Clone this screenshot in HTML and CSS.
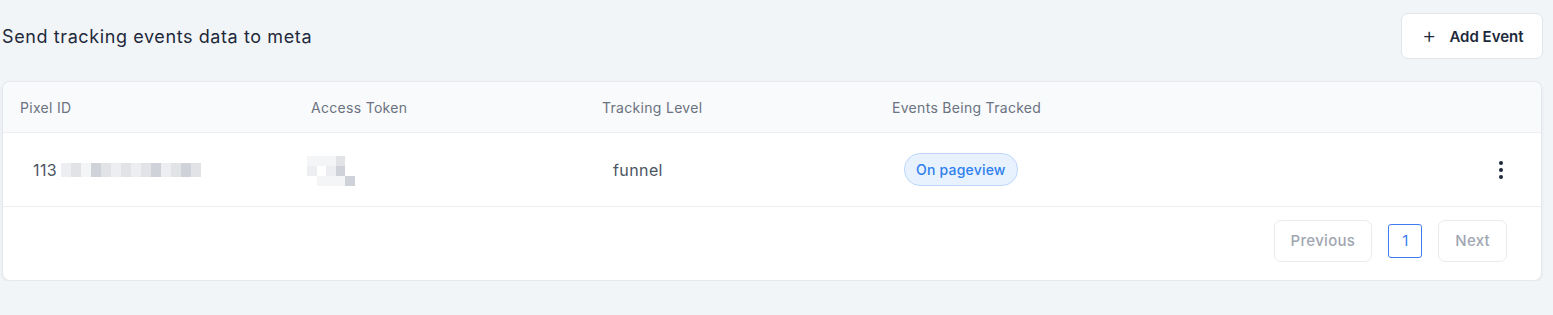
FILE: index.html
```html
<!DOCTYPE html>
<html lang="en">
<head>
    <meta charset="UTF-8">
    <meta name="viewport" content="width=device-width, initial-scale=1.0">
    <title>Meta tracking</title>
    <link rel="stylesheet" href="styles.css">
</head>
<body>
    <div class="page">
        <div class="topbar">
            <h2 class="title">Send tracking events data to meta</h2>
            <button class="add-btn"><span class="plus">+</span> Add Event</button>
        </div>
        <div class="card">
            <div class="row head">
                <div class="cell">Pixel ID</div>
                <div class="cell">Access Token</div>
                <div class="cell">Tracking Level</div>
                <div class="cell">Events Being Tracked</div>
                <div class="cell"></div>
            </div>
            <div class="row body">
                <div class="cell pixel">
                    113
                    <span class="blur-line">
                        <i class="b1"></i><i class="b2"></i><i class="b0"></i><i class="b3"></i><i class="b2"></i><i class="b1"></i><i class="b2"></i><i class="b1"></i><i class="b2"></i><i class="b3"></i><i class="b1"></i><i class="b2"></i><i class="b3"></i><i class="b2"></i>
                    </span>
                </div>
                <div class="cell token">
                    <span class="blur-grid">
                        <i class="b0"></i><i class="b0"></i><i class="b0"></i><i class="b2"></i><i></i>
                        <i class="b1"></i><i></i><i class="b1"></i><i class="b3"></i><i></i>
                        <i></i><i class="b0"></i><i class="b0"></i><i class="b0"></i><i class="b3"></i>
                    </span>
                </div>
                <div class="cell level">funnel</div>
                <div class="cell events"><span class="badge">On pageview</span></div>
                <div class="cell menu">
                    <svg width="6" height="20" viewBox="0 0 6 20"><circle cx="3" cy="3" r="2" fill="#1e293b"/><circle cx="3" cy="10" r="2" fill="#1e293b"/><circle cx="3" cy="17" r="2" fill="#1e293b"/></svg>
                </div>
            </div>
            <div class="pager">
                <button class="page-btn">Previous</button>
                <span class="page-num">1</span>
                <button class="page-btn">Next</button>
            </div>
        </div>
    </div>
</body>
</html>
```

FILE: styles.css
```css
body {
    margin: 0;
    background-color: #f2f5f8;
    font-family: Inter, "Noto Sans", Arial, sans-serif;
    color: #1e293b;
}
.page {
    padding: 13px 11px 0 2px;
}
.topbar {
    display: flex;
    justify-content: space-between;
    align-items: center;
    margin-bottom: 22px;
}
.title {
    margin: 0;
    font-size: 18px;
    font-weight: 400;
    letter-spacing: 0.6px;
    color: #1e293b;
}
.add-btn {
    display: flex;
    align-items: center;
    gap: 13px;
    height: 46px;
    width: 142px;
    padding: 0 0 0 20px;
    background: white;
    border: 1px solid #e2e6eb;
    border-radius: 7px;
    font-family: inherit;
    font-size: 15px;
    font-weight: 600;
    color: #1e293b;
    margin-right: -1px;
}
.plus {
    font-size: 22px;
    font-weight: 300;
    line-height: 1;
    margin-top: -2px;
}
.card {
    background: white;
    border: 1px solid #e5e8ec;
    border-radius: 8px;
    box-shadow: 0 1px 3px rgba(0, 0, 0, 0.06);
    overflow: hidden;
}
.row {
    display: grid;
    grid-template-columns: 291px 291px 290px 1fr 60px;
    align-items: center;
    border-bottom: 1px solid #eceff2;
}
.head {
    height: 50px;
    background: #f8fafc;
    font-size: 14px;
    letter-spacing: 0.3px;
    color: #6b7280;
}
.head .cell {
    padding-left: 17px;
}
.body {
    height: 73px;
    font-size: 16px;
    letter-spacing: 0.4px;
    color: #4b5563;
}
.pixel {
    padding-left: 30px;
    display: flex;
    align-items: center;
}
.blur-line {
    display: inline-flex;
    margin-left: 4px;
}
.blur-line i {
    display: block;
    width: 10px;
    height: 14px;
}
.token {
    padding-left: 13px;
}
.blur-grid {
    display: grid;
    grid-template-columns: repeat(5, 9.5px);
    grid-auto-rows: 10px;
    margin-top: 2px;
}
.blur-grid i {
    display: block;
}
.b0 { background: #f4f5f7; }
.b1 { background: #eceef1; }
.b2 { background: #e1e3e7; }
.b3 { background: #cfd2d8; }
.level {
    padding-left: 28px;
}
.events {
    padding-left: 29px;
}
.badge {
    display: inline-block;
    padding: 7px 11px;
    border: 1px solid #bcd7fb;
    border-radius: 16px;
    background: #e8f2ff;
    color: #2f80ed;
    font-size: 14px;
    letter-spacing: 0.2px;
    font-weight: 500;
}
.menu {
    display: flex;
    padding-left: 17px;
}
.pager {
    display: flex;
    justify-content: flex-end;
    align-items: center;
    gap: 16px;
    height: 67px;
    padding: 0 34px 6px 0;
}
.page-btn {
    height: 42px;
    padding: 0 16px;
    background: white;
    border: 1px solid #e8ebef;
    border-radius: 7px;
    font-family: inherit;
    font-size: 15px;
    letter-spacing: 0.3px;
    font-weight: 500;
    color: #a0a6b0;
}
.page-num {
    display: flex;
    align-items: center;
    justify-content: center;
    width: 32px;
    height: 32px;
    border: 1px solid #3b7cf0;
    border-radius: 3px;
    color: #3b7cf0;
    font-size: 15px;
}
```
